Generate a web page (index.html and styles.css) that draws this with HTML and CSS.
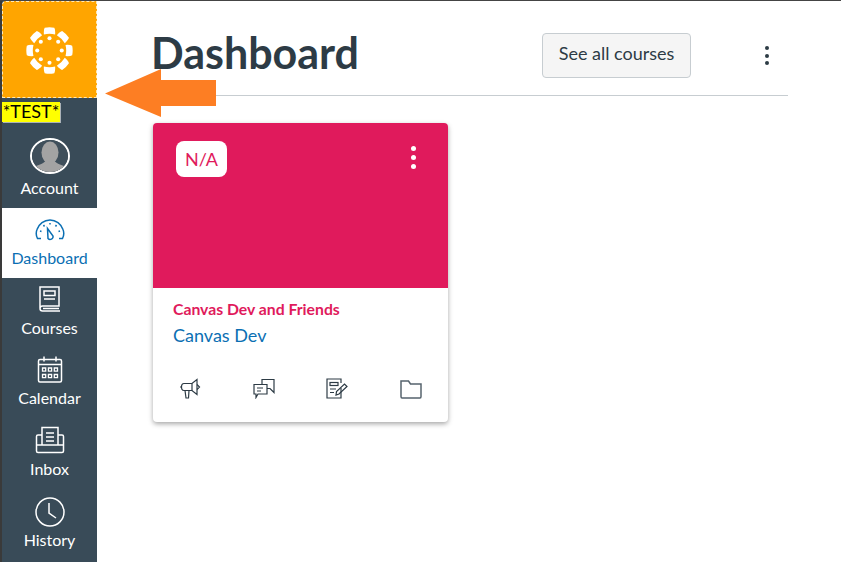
FILE: index.html
```html
<!DOCTYPE html>
<html lang="en">
<head>
  <meta charset="UTF-8" />
  <title>Dashboard</title>
  <link rel="stylesheet" href="styles.css">
</head>
<body>

  <!-- Global navigation -->
  <nav class="side-nav">
    <a class="logo" href="#home">
      <svg width="47" height="47" viewBox="0 0 46 46" fill="#fff">
        <path d="M17.500 7.300 Q17.200 2.500 18.300 0.800 A23 23 0 0 1 27.700 0.800 Q28.800 2.500 28.500 7.300 Q23 6 17.500 7.300 Z"/>
        <path transform="rotate(45 23 23)" d="M17.500 7.300 Q17.200 2.500 18.300 0.800 A23 23 0 0 1 27.700 0.800 Q28.800 2.500 28.500 7.300 Q23 6 17.500 7.300 Z"/>
        <path transform="rotate(90 23 23)" d="M17.500 7.300 Q17.200 2.500 18.300 0.800 A23 23 0 0 1 27.700 0.800 Q28.800 2.500 28.500 7.300 Q23 6 17.500 7.300 Z"/>
        <path transform="rotate(135 23 23)" d="M17.500 7.300 Q17.200 2.500 18.300 0.800 A23 23 0 0 1 27.700 0.800 Q28.800 2.500 28.500 7.300 Q23 6 17.500 7.300 Z"/>
        <path transform="rotate(180 23 23)" d="M17.500 7.300 Q17.200 2.500 18.300 0.800 A23 23 0 0 1 27.700 0.800 Q28.800 2.500 28.500 7.300 Q23 6 17.500 7.300 Z"/>
        <path transform="rotate(225 23 23)" d="M17.500 7.300 Q17.200 2.500 18.300 0.800 A23 23 0 0 1 27.700 0.800 Q28.800 2.500 28.500 7.300 Q23 6 17.500 7.300 Z"/>
        <path transform="rotate(270 23 23)" d="M17.500 7.300 Q17.200 2.500 18.300 0.800 A23 23 0 0 1 27.700 0.800 Q28.800 2.500 28.500 7.300 Q23 6 17.500 7.300 Z"/>
        <path transform="rotate(315 23 23)" d="M17.500 7.300 Q17.200 2.500 18.300 0.800 A23 23 0 0 1 27.700 0.800 Q28.800 2.500 28.500 7.300 Q23 6 17.500 7.300 Z"/>
        <circle cx="23" cy="11" r="2"/>
        <circle cx="23" cy="35" r="2"/>
        <circle cx="11" cy="23" r="2"/>
        <circle cx="35" cy="23" r="2"/>
        <circle cx="14.500" cy="14.500" r="2"/>
        <circle cx="31.500" cy="14.500" r="2"/>
        <circle cx="14.500" cy="31.500" r="2"/>
        <circle cx="31.500" cy="31.500" r="2"/>
      </svg>
    </a>
    <div class="env-row"><span class="env-tag">*TEST*</span></div>

    <a class="nav-item" href="#account">
      <span class="avatar">
        <svg width="36" height="36" viewBox="0 0 36 36">
          <rect width="36" height="36" fill="#3f4f5b"/>
          <ellipse cx="18" cy="12.500" rx="8.500" ry="11" fill="#a3a3a3"/>
          <path d="M0 36 V28 C4 25 11 25 14 20 L22 20 C25 25 32 25 36 28 V36 Z" fill="#a3a3a3"/>
        </svg>
      </span>
      Account
    </a>

    <a class="nav-item active" href="#dashboard">
      <svg class="nav-icon" width="30" height="24" viewBox="0 0 30 24" fill="none" stroke="#0b6fb3" stroke-width="1.500">
        <path d="M6 19.500 H2.500 C1 16.500 0.800 13.500 2 10.500 C4 5 9 1 15 1 C21 1 26 5 28 10.500 C29.200 13.500 29 16.500 27.500 19.500 H24"/>
        <path d="M12.500 9.500 L18 17 A2.900 2.900 0 0 1 13 19.500 Z"/>
        <path d="M15 4 V5.500 M8.500 6 L9.500 7.500 M21.500 6 L20.500 7.500 M5 12 L6.500 12.500 M25 12 L23.500 12.500"/>
      </svg>
      Dashboard
    </a>

    <a class="nav-item" href="#courses">
      <svg class="nav-icon" width="24" height="28" viewBox="0 0 24 28" fill="none" stroke="#fff" stroke-width="1.500">
        <path d="M2 23 V2 H21 V21 H4.500 C3 21 2 22 2 23.500 C2 25 3 26 4.500 26 H22 M5 23.500 H21"/>
        <rect x="6" y="6" width="11" height="4.500"/>
        <path d="M6 14 H17"/>
      </svg>
      Courses
    </a>

    <a class="nav-item" href="#calendar">
      <svg class="nav-icon" width="26" height="27" viewBox="0 0 26 27" fill="none" stroke="#fff" stroke-width="1.500">
        <rect x="1.500" y="3.500" width="23" height="22.500" rx="1.500"/>
        <path d="M1.500 8.500 H24.500 M7 0.500 V5.500 M19 0.500 V5.500"/>
        <path stroke-width="1.300" d="M5.500 12 h3.200 v3.200 h-3.200 Z M11.400 12 h3.200 v3.200 h-3.200 Z M17.300 12 h3.200 v3.200 h-3.200 Z M5.500 18.500 h3.200 v3.200 h-3.200 Z M11.400 18.500 h3.200 v3.200 h-3.200 Z M17.300 18.500 h3.200 v3.200 h-3.200 Z"/>
      </svg>
      Calendar
    </a>

    <a class="nav-item nudged" href="#inbox">
      <svg class="nav-icon" width="30" height="28" viewBox="0 0 30 28" fill="none" stroke="#fff" stroke-width="1.500">
        <path d="M7 19 V1.500 H23 V19"/>
        <path d="M11 7 H19 M11 11 H19 M11 15 H19"/>
        <path d="M7 9 H3 C2 9 1.500 9.500 1.500 10.500 V25 C1.500 26 2 26.500 3 26.500 H27 C28 26.500 28.500 26 28.500 25 V10.500 C28.500 9.500 28 9 27 9 H23"/>
        <path d="M1.500 19 H28.500"/>
      </svg>
      Inbox
    </a>

    <a class="nav-item nudged" href="#history">
      <svg class="nav-icon history-icon" width="30" height="30" viewBox="0 0 30 30" fill="none" stroke="#fff" stroke-width="1.500">
        <circle cx="15" cy="15" r="14"/>
        <path d="M14 6 V16 L21 21"/>
      </svg>
      History
    </a>
  </nav>

  <main class="content">
    <header class="page-header">
      <h1>Dashboard</h1>
      <button type="button" class="see-all">See all courses</button>
      <span class="kebab dark"><i></i><i></i><i></i></span>
    </header>

    <div class="card">
      <div class="card-top">
        <span class="term">N/A</span>
        <span class="kebab"><i></i><i></i><i></i></span>
      </div>
      <div class="card-body">
        <div class="course-title">Canvas Dev and Friends</div>
        <a class="course-code" href="#course">Canvas Dev</a>
        <div class="card-actions">
          <svg width="22" height="21" viewBox="0 0 22 21" fill="none" stroke="#2d3b45" stroke-width="1.200">
            <path d="M5 5.500 H13 L18 1.500 V16.500 L13 12.500 H5 C3 12.500 2.500 11 2.500 9 C2.500 7 3 5.500 5 5.500 Z"/>
            <path d="M13 5.500 V12.500 M2.500 9 H1 M18 6.500 L20.500 9 L18 11.500"/>
            <path d="M6 12.500 L7 20 H9.500 L10 12.500"/>
          </svg>
          <svg width="22" height="21" viewBox="0 0 22 21" fill="none" stroke="#2d3b45" stroke-width="1.200">
            <path d="M9 6 V1.500 H21 V14.500 L17 10.500 H14"/>
            <path d="M1 6.500 H14 V16 H5 L3 19.500 V16 H1 Z"/>
            <path d="M4 10 H10 M4 13 H8"/>
          </svg>
          <svg width="22" height="21" viewBox="0 0 22 21" fill="none" stroke="#2d3b45" stroke-width="1.200">
            <path d="M15 10 V20 H1 V1 H15 V5"/>
            <rect x="4" y="4.500" width="8" height="3"/>
            <path d="M4 11 H10 M4 14.500 H8"/>
            <path d="M10 17 L10.500 13.500 L18.500 6 L21 8.500 L13 16 Z"/>
          </svg>
          <svg width="22" height="21" viewBox="0 0 22 21" fill="none" stroke="#56636d" stroke-width="1.500">
            <path d="M1 18.500 V3 H8.500 L10.500 6 H21 V18.500 C21 19.500 20.500 20 20 20 H2 C1.500 20 1 19.500 1 18.500 Z"/>
          </svg>
        </div>
      </div>
    </div>
  </main>

  <!-- Annotation drawn over the screenshot -->
  <svg class="arrow" width="112" height="50" viewBox="0 0 112 50">
    <path d="M0 24.500 L56 0 V11 H111 V37 H56 V48 Z" fill="#fd7e23"/>
  </svg>

</body>
</html>
```

FILE: styles.css
```css
html, body {
  height: 100%;
}
body {
  margin: 0;
  display: flex;
  overflow: hidden;
  background: white;
  border-top: 1px solid #444;
  box-sizing: border-box;
  font-family: "Lato", "Liberation Sans", sans-serif;
  color: #2d3b45;
}
a {
  text-decoration: none;
}
.side-nav {
  width: 97px;
  flex-shrink: 0;
  box-sizing: border-box;
  border-left: 2px solid #3a3a3a;
  background: #394b58;
  display: flex;
  flex-direction: column;
}
.logo {
  height: 97px;
  flex-shrink: 0;
  box-sizing: border-box;
  background: #ffa500;
  border: 1px dashed #ffe9b8;
  border-top-left-radius: 4px;
  display: flex;
  align-items: center;
  justify-content: center;
  padding-top: 1px;
}
.logo svg {
  flex-shrink: 0;
}
.env-row {
  height: 40px;
  flex-shrink: 0;
  box-sizing: border-box;
  padding-top: 4px;
}
.env-tag {
  display: block;
  width: 58px;
  height: 20px;
  line-height: 19px;
  background: yellow;
  color: black;
  font-size: 18px;
  text-align: center;
  box-shadow: 1px 1px 0 #aab2b8;
}
.nav-item {
  height: 70px;
  flex-shrink: 0;
  display: flex;
  flex-direction: column;
  align-items: center;
  justify-content: flex-end;
  padding-bottom: 10px;
  box-sizing: border-box;
  color: white;
  font-size: 16px;
  line-height: 20px;
}
.nav-item.nudged {
  margin-top: 1px;
}
.nav-item.active {
  background: white;
  color: #0b6fb3;
}
.nav-icon {
  margin-bottom: 5px;
}
.history-icon {
  margin-bottom: 3px;
}
.avatar {
  width: 36px;
  height: 36px;
  border: 2px solid white;
  border-radius: 50%;
  overflow: hidden;
  margin-bottom: 4px;
}
.avatar svg {
  display: block;
}
.content {
  flex: 1;
  padding-left: 55px;
  padding-right: 53px;
  min-width: 0;
}
.page-header {
  height: 95px;
  flex-shrink: 0;
  box-sizing: border-box;
  border-bottom: 1px solid #c7cdd1;
  display: flex;
  align-items: flex-start;
}
h1 {
  margin: 26px 0 0 -1px;
  flex: 1;
  font-size: 43px;
  line-height: 52px;
  font-weight: 700;
  color: #2d3b45;
}
.see-all {
  margin-top: 32px;
  width: 149px;
  height: 45px;
  padding: 0 0 6px;
  border: 1px solid #c7cdd1;
  border-radius: 4px;
  background: #f5f5f5;
  color: #2d3b45;
  font-family: inherit;
  font-size: 18px;
  cursor: pointer;
}
.kebab {
  display: flex;
  flex-direction: column;
  gap: 4px;
}
.kebab i {
  display: block;
  width: 5px;
  height: 5px;
  border-radius: 50%;
  background: white;
}
.kebab.dark {
  margin: 45px 19px 0 74px;
  gap: 3.5px;
}
.kebab.dark i {
  width: 4px;
  height: 4px;
  background: #2d3b45;
}
.card {
  width: 295px;
  height: 299px;
  margin: 27px 0 0 1px;
  border-radius: 4px;
  overflow: hidden;
  box-shadow: 0 2px 5px rgba(0, 0, 0, 0.35);
  background: white;
}
.card-top {
  height: 165px;
  box-sizing: border-box;
  padding: 18px 32px 0 23px;
  background: #e01a5c;
  display: flex;
  justify-content: space-between;
  align-items: flex-start;
}
.term {
  width: 51px;
  height: 36px;
  line-height: 36px;
  text-align: center;
  border-radius: 8px;
  background: white;
  color: #e01a5c;
  font-size: 18px;
}
.card-top .kebab {
  margin-top: 5px;
}
.card-body {
  padding: 11px 20px 0;
}
.course-title {
  font-size: 15.75px;
  line-height: 20px;
  font-weight: 700;
  color: #e01a5c;
}
.course-code {
  display: block;
  margin-top: 4px;
  font-size: 18px;
  line-height: 24px;
  color: #0b6fb3;
}
.card-actions {
  display: flex;
  justify-content: space-between;
  margin-top: 31px;
  padding: 0 6px;
}
.arrow {
  position: absolute;
  left: 105px;
  top: 69px;
}
```
